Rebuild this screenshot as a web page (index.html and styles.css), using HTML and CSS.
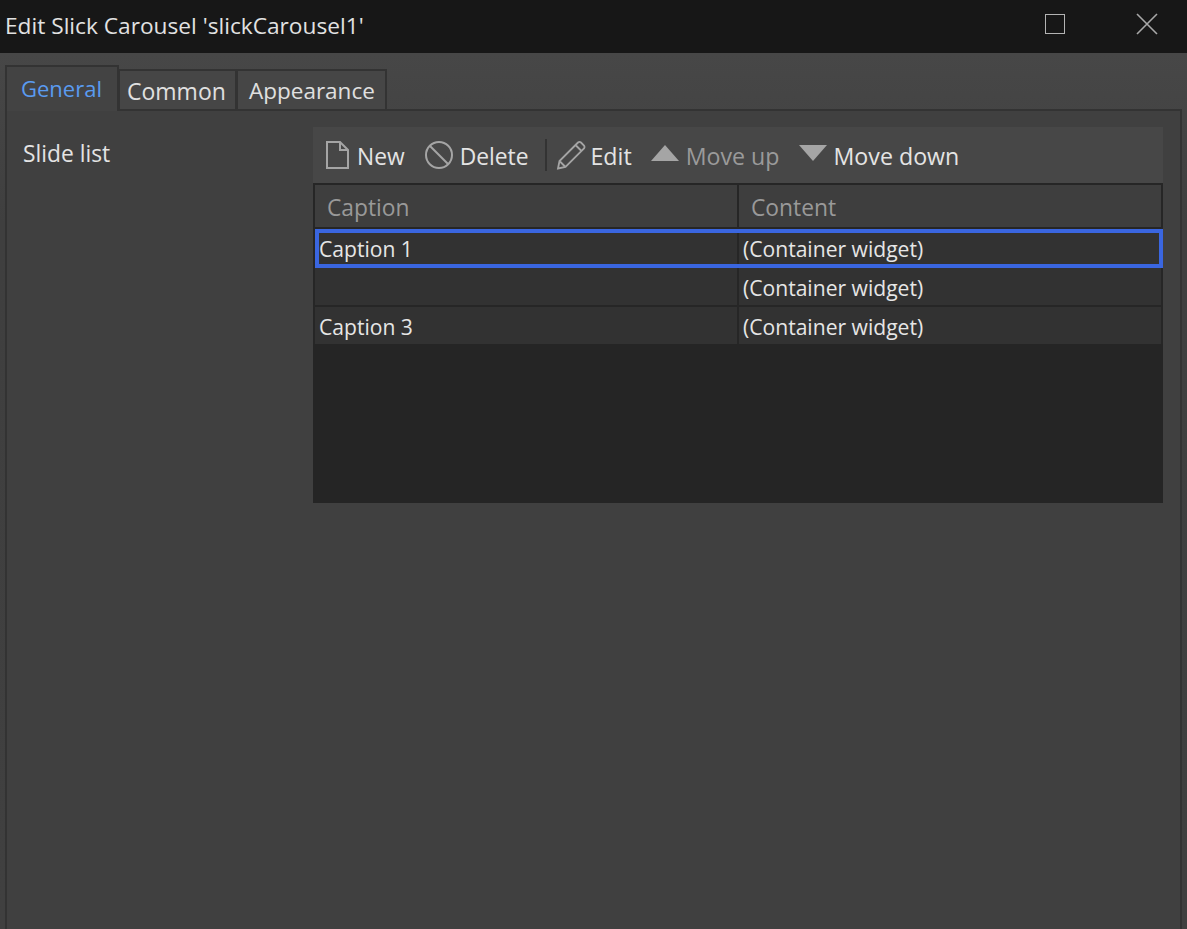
FILE: index.html
```html
<!DOCTYPE html>
<html lang="en">
<head>
<meta charset="utf-8">
<title>Edit Slick Carousel</title>
<link rel="stylesheet" href="styles.css">
</head>
<body>
<div class="window">
  <header class="titlebar">
    <span class="title">Edit Slick Carousel 'slickCarousel1'</span>
    <div class="winctrls">
      <span class="maximize"></span>
      <svg class="close" width="22" height="22" viewBox="0 0 22 22"><path d="M1 1L21 21M21 1L1 21" stroke="#a8a8a8" stroke-width="1.6" fill="none"/></svg>
    </div>
  </header>
  <main class="body">
    <nav class="tabs">
      <div class="tab active">General</div>
      <div class="tab t2">Common</div>
      <div class="tab t3">Appearance</div>
    </nav>
    <section class="panel">
      <div class="label">Slide list</div>
      <div class="editor">
        <div class="toolbar">
          <button class="tool t-new">
            <svg width="24" height="28" viewBox="0 0 24 28"><path d="M2 1H15L23 9V27H2Z M15 1V9H23" fill="none" stroke="#a5a5a5" stroke-width="2"/></svg>
            <span>New</span>
          </button>
          <button class="tool t-delete">
            <svg width="30" height="30" viewBox="0 0 30 30"><circle cx="15" cy="15" r="13" fill="none" stroke="#a5a5a5" stroke-width="2"/><path d="M6 6L24 24" stroke="#a5a5a5" stroke-width="2"/></svg>
            <span>Delete</span>
          </button>
          <span class="sep"></span>
          <button class="tool t-edit">
            <svg width="30" height="30" viewBox="0 0 30 30"><path d="M2 28.5L3.5 21L22 2.5Q23.5 1.2 25 2.5L28 5.5Q29 7 28 8.5L9.5 27Z M3.5 21L9.5 27 M19.5 5L25.5 11" fill="none" stroke="#a5a5a5" stroke-width="1.8"/></svg>
            <span>Edit</span>
          </button>
          <button class="tool t-up disabled">
            <svg width="28" height="16" viewBox="0 0 28 16"><path d="M14 0L28 16H0Z" fill="#a5a5a5"/></svg>
            <span>Move up</span>
          </button>
          <button class="tool t-down">
            <svg width="28" height="16" viewBox="0 0 28 16"><path d="M14 16L28 0H0Z" fill="#a5a5a5"/></svg>
            <span>Move down</span>
          </button>
        </div>
        <div class="table">
          <div class="row head">
            <div class="cell c1">Caption</div>
            <div class="cell c2">Content</div>
          </div>
          <div class="row selected">
            <div class="cell c1">Caption 1</div>
            <div class="cell c2">(Container widget)</div>
          </div>
          <div class="row r2">
            <div class="cell c1"></div>
            <div class="cell c2">(Container widget)</div>
          </div>
          <div class="row r3">
            <div class="cell c1">Caption 3</div>
            <div class="cell c2">(Container widget)</div>
          </div>
        </div>
      </div>
    </section>
  </main>
</div>
</body>
</html>
```
FILE: styles.css
```css
* { box-sizing: border-box; }
html, body { margin: 0; height: 100%; overflow: hidden; }
body { font-family: "Open Sans", "Noto Sans", sans-serif; font-size: 22.8px; color: #e4e4e4; background: #434343; }
.window { height: 929px; display: flex; flex-direction: column; }
.titlebar { height: 53px; flex: none; background: #171717; display: flex; align-items: center; justify-content: space-between; padding: 0 29px 3px 5px; }
.title { font-size: 22.7px; color: #e2e2e2; }
.winctrls { display: flex; align-items: center; gap: 71px; margin-top: -2px; }
.maximize { width: 20px; height: 20px; border: 1px solid #b4b4b4; display: block; }
.close { display: block; }
.body { flex: 1; background: linear-gradient(#474747, #3f3f3f 170px, #404040); padding: 12px 5px 0 5px; display: flex; flex-direction: column; min-height: 0; }
.tabs { display: flex; align-items: flex-end; height: 46px; flex: none; margin-bottom: -2px; position: relative; z-index: 1; }
.tab { height: 42px; border: 2px solid #333; padding: 5px 0 0 7px; background: #464646; margin-left: -1px; line-height: 30px; color: #e0e0e0; }
.tab.t2 { width: 119px; font-size: 23px; }
.tab.t3 { width: 151px; font-size: 22.5px; padding-left: 11px; }
.tab.active { margin-left: 0; height: 46px; width: 114px; padding: 6px 0 0 14px; font-size: 22px; color: #5a9bf0; background: #434343; border-bottom: 0; }
.panel { flex: 1; border: 2px solid #333; border-bottom: 0; width: 1177px; background: #404040; display: flex; align-items: flex-start; padding: 16px 17px 0 16px; min-height: 0; }
.label { width: 290px; flex: none; padding-top: 12px; line-height: 30px; }
.editor { width: 850px; height: 376px; display: flex; flex-direction: column; background: #252525; }
.toolbar { height: 56px; flex: none; background: #474747; display: flex; align-items: center; padding: 1px 0 0 12px; font-size: 23.2px; }
.tool { all: unset; display: flex; align-items: center; color: #e4e4e4; font: inherit; line-height: 30px; }
.tool.disabled { color: #9a9a9a; }
.tool svg { margin-top: -1px; }
.t-new { gap: 8px; margin-right: 19px; }
.t-new span, .t-delete span { font-size: 22.8px; padding-top: 2px; }
.t-delete { gap: 6px; }
.sep { width: 2px; height: 32px; background: #333; margin: -1px 9px 0 17px; }
.t-edit { gap: 4px; margin-right: 19px; }
.t-up { gap: 7px; margin-right: 19px; }
.t-down { gap: 7px; }
.t-up svg, .t-down svg { margin-top: -5px; }
.table { display: flex; flex-direction: column; border: 2px solid #262626; border-bottom: 0; }
.row { display: flex; height: 39px; background: #323232; border-bottom: 2px solid #262626; align-items: center; }
.row.r3 { height: 37px; border-bottom: 0; }
.cell { line-height: 30px; padding-left: 4px; height: 100%; display: flex; align-items: center; font-size: 21.1px; color: #e6e6e6; white-space: nowrap; }
.c1 { width: 424px; border-right: 2px solid #262626; flex: none; }
.c2 { flex: 1; padding-left: 4px; }
.row.r2 .cell { padding-top: 3px; }
.row.r3 .cell { padding-top: 3px; }
.row.head { height: 44px; background: #3e3e3e; }
.row.head .cell { padding: 3px 0 0 12px; font-size: 22.8px; color: #999; }
.row.selected { position: relative; outline: 4px solid #3a66e0; outline-offset: -4px; border-bottom: 0; margin-right: -2px; }
```
